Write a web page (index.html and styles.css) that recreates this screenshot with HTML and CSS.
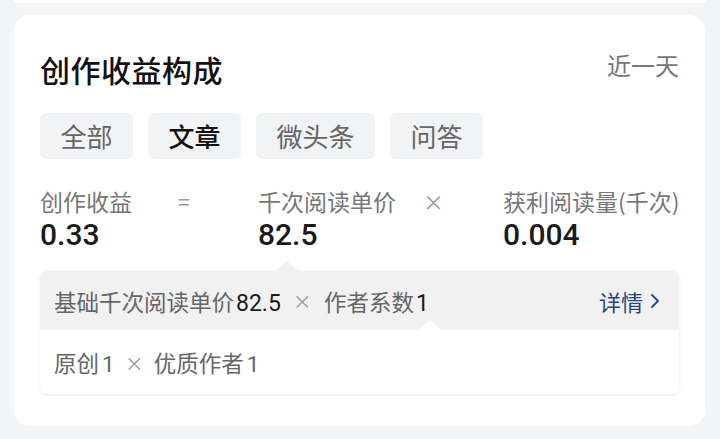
FILE: index.html
```html
<!DOCTYPE html>
<html lang="zh-CN">
<head>
<meta charset="utf-8">
<title>创作收益构成</title>
<link rel="stylesheet" href="styles.css">
</head>
<body>
<div class="prev-card"></div>
<section class="card">
  <header class="card-head">
    <h1 class="title">创作收益构成</h1>
    <span class="range">近一天</span>
  </header>
  <nav class="tabs">
    <span class="tab">全部</span>
    <span class="tab active">文章</span>
    <span class="tab">微头条</span>
    <span class="tab">问答</span>
  </nav>
  <div class="formula">
    <div class="term">
      <div class="label">创作收益</div>
      <div class="value">0.33</div>
    </div>
    <div class="op">=</div>
    <div class="term">
      <div class="label">千次阅读单价</div>
      <div class="value">82.5</div>
    </div>
    <div class="op">×</div>
    <div class="term">
      <div class="label">获利阅读量(千次)</div>
      <div class="value">0.004</div>
    </div>
  </div>
  <div class="detail">
    <div class="detail-top">
      <span class="ptr ptr-gray"></span>
      <span class="line">基础千次阅读单价<b class="num">82.5</b><i class="x">×</i>作者系数<b class="num">1</b></span>
      <a class="more">详情<svg class="chev" width="10" height="18" viewBox="0 0 10 18"><path d="M2 3 L8 9 L2 15" fill="none" stroke="currentColor" stroke-width="1.8" stroke-linecap="round" stroke-linejoin="round"/></svg></a>
    </div>
    <div class="detail-bottom">
      <span class="ptr ptr-white"></span>
      <span class="line line-sub">原创<span class="num2">1</span><i class="x">×</i>优质作者<span class="num2">1</span></span>
    </div>
  </div>
</section>
</body>
</html>
```
FILE: styles.css
```css
* { box-sizing: border-box; }
html, body { margin: 0; padding: 0; }
body {
  background: #f4f5f6;
  width: 720px;
  height: 439px;
  overflow: hidden;
  font-family: "Noto Sans CJK SC", "Noto Sans", sans-serif;
  color: #222;
}
.prev-card {
  height: 3px;
  margin: 0 14px;
  background: #fff;
  border-radius: 0 0 16px 16px;
}
.card {
  margin: 12px 15px 0 14px;
  height: 411px;
  background: #fff;
  border-radius: 16px;
  padding: 32px 28px 0 26px;
}
.card-head {
  display: flex;
  justify-content: space-between;
  align-items: center;
  height: 44px;
}
.title {
  margin: 0;
  font-size: 30px;
  font-weight: 500;
  letter-spacing: 0.5px;
  color: #111;
  line-height: 44px;
}
.range {
  font-size: 24px;
  color: #777;
  margin-top: -10px;
  margin-right: -2px;
}
.tabs {
  display: flex;
  gap: 15px;
  margin-top: 22px;
}
.tab {
  height: 46px;
  padding: 0 20.5px;
  background: #f2f3f5;
  border-radius: 6px;
  font-size: 26px;
  line-height: 46px;
  color: #666;
}
.tab.active {
  color: #111;
  font-weight: 500;
}
.formula {
  display: grid;
  grid-template-columns: 138px 80px 165px 80px auto;
  margin-top: 26px;
}
.label {
  font-size: 23px;
  line-height: 32px;
  color: #777;
  white-space: nowrap;
}
.value {
  font-family: Roboto, "Noto Sans", sans-serif;
  font-size: 30px;
  font-weight: 500;
  line-height: 36px;
  color: #1a1a1a;
}
.op {
  font-size: 21px;
  line-height: 32px;
  color: #999;
}
.detail {
  margin-top: 18px;
  width: 639px;
  border-radius: 6px;
  background: #fff;
  box-shadow: 0 1px 3px rgba(0,0,0,0.10);
}
.detail-top, .detail-bottom {
  position: relative;
  display: flex;
  align-items: center;
  padding: 0 19px 0 14px;
}
.detail-top {
  height: 59px;
  background: #f1f1f2;
  border-radius: 6px 6px 0 0;
  justify-content: space-between;
}
.detail-bottom {
  height: 64px;
}
.line {
  font-size: 22.5px;
  color: #666;
  display: flex;
  align-items: baseline;
  white-space: nowrap;
}
.num {
  font-family: Roboto, "Noto Sans", sans-serif;
  font-weight: 400;
  color: #1a1a1a;
  font-size: 23px;
  margin-left: 2px;
}
.num2 {
  font-family: Roboto, "Noto Sans", sans-serif;
  margin-left: 3px;
}
.x {
  align-self: center;
  font-style: normal;
  font-size: 19px;
  color: #999;
  margin: 0 12px;
}
.line-sub .x { margin: 0 10px; }
.more {
  color: #25467e;
  font-size: 22px;
  display: flex;
  align-items: center;
  gap: 7px;
}
.chev { display: block; }
.ptr {
  position: absolute;
  width: 0;
  height: 0;
  border-left: 12px solid transparent;
  border-right: 12px solid transparent;
  border-bottom: 10px solid #f1f1f2;
  top: -10px;
}
.ptr-gray { left: 235px; }
.ptr-white {
  left: 378px;
  border-bottom-color: #fff;
}
```
